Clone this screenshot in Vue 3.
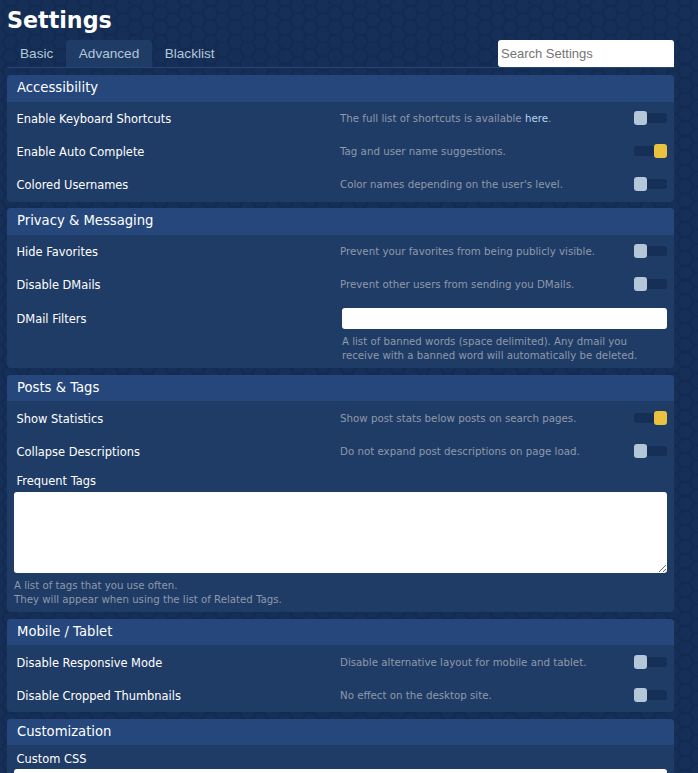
<script setup>
const sections = [
  {
    title: 'Accessibility',
    rows: [
      { label: 'Enable Keyboard Shortcuts', hint: 'The full list of shortcuts is available ', link: 'here', after: '.', on: false },
      { label: 'Enable Auto Complete', hint: 'Tag and user name suggestions.', on: true },
      { label: 'Colored Usernames', hint: "Color names depending on the user's level.", on: false },
    ],
  },
  {
    title: 'Privacy & Messaging',
    rows: [
      { label: 'Hide Favorites', hint: 'Prevent your favorites from being publicly visible.', on: false },
      { label: 'Disable DMails', hint: 'Prevent other users from sending you DMails.', on: false },
      { label: 'DMail Filters', filter: true },
    ],
  },
  {
    title: 'Posts & Tags',
    rows: [
      { label: 'Show Statistics', hint: 'Show post stats below posts on search pages.', on: true },
      { label: 'Collapse Descriptions', hint: 'Do not expand post descriptions on page load.', on: false },
    ],
    tags: true,
  },
  {
    title: 'Mobile / Tablet',
    rows: [
      { label: 'Disable Responsive Mode', hint: 'Disable alternative layout for mobile and tablet.', on: false },
      { label: 'Disable Cropped Thumbnails', hint: 'No effect on the desktop site.', on: false },
    ],
  },
]
</script>

<template>
  <div class="page">
    <h1>Settings</h1>
    <div class="tabs">
      <a class="tab">Basic</a>
      <a class="tab active">Advanced</a>
      <a class="tab">Blacklist</a>
      <input class="search" type="text" placeholder="Search Settings" />
    </div>

    <section v-for="s in sections" :key="s.title" class="section">
      <h2>{{ s.title }}</h2>
      <div class="body">
        <template v-for="r in s.rows" :key="r.label">
          <div v-if="r.filter" class="row filter">
            <span class="label">{{ r.label }}</span>
            <div class="filter-col">
              <input class="filter-input" type="text" />
              <p class="note">A list of banned words (space delimited). Any dmail you<br />receive with a banned word will automatically be deleted.</p>
            </div>
          </div>
          <div v-else class="row">
            <span class="label">{{ r.label }}</span>
            <span class="hint">{{ r.hint }}<a v-if="r.link" class="link">{{ r.link }}</a>{{ r.after }}</span>
            <span class="switch" :class="{ on: r.on }"><i></i></span>
          </div>
        </template>
        <div v-if="s.tags" class="tags">
          <span class="label">Frequent Tags</span>
          <textarea class="tag-box"></textarea>
          <p class="note">A list of tags that you use often.<br />They will appear when using the list of Related Tags.</p>
        </div>
      </div>
    </section>

    <section class="section">
      <h2>Customization</h2>
      <div class="body">
        <div class="tags custom">
          <span class="label">Custom CSS</span>
          <textarea class="tag-box"></textarea>
        </div>
      </div>
    </section>
  </div>
</template>

<style>
html, body {
  margin: 0;
  height: 100%;
  overflow: hidden;
  background-color: #152f56;
}
</style>

<style scoped>
.page {
  box-sizing: border-box;
  height: 773px;
  overflow: hidden;
  padding: 0 24px 0 7px;
  font-family: "DejaVu Sans", Verdana, sans-serif;
  color: #fff;
  background-color: #152f58;
  background-image: url("data:image/svg+xml,%3Csvg xmlns='http://www.w3.org/2000/svg' width='25' height='14.43' viewBox='0 0 25 14.43'%3E%3Cpath fill='none' stroke='%23132b50' stroke-width='2.6' d='M0 7.215 L4.17 0 M0 7.215 L4.17 14.43 M4.17 0 H12.5 M4.17 14.43 H12.5 M12.5 0 L16.67 7.215 L12.5 14.43 M16.67 7.215 H25'/%3E%3C/svg%3E");
  background-position: 1.67px 6px;
}
h1 {
  margin: 0;
  padding-top: 7px;
  font-size: 22.2px;
  line-height: 26px;
  font-weight: 700;
}
.tabs {
  display: flex;
  align-items: stretch;
  height: 27px;
  margin-top: 7px;
  border-bottom: 1px solid #24457a;
  font-family: "Liberation Sans", Arial, sans-serif;
  font-size: 13.6px;
}
.tab {
  display: flex;
  align-items: center;
  padding: 0 13px;
  color: #b4c7d9;
  border-radius: 4px 4px 0 0;
}
.tab.active {
  padding: 0 12.5px;
  background: #1f3c67;
}
.search {
  box-sizing: border-box;
  width: 176px;
  height: 27px;
  margin-left: auto;
  padding: 0 3px;
  border: 0;
  border-radius: 3px 3px 0 3px;
  background: #fff;
  font-family: "Liberation Sans", Arial, sans-serif;
  font-size: 13px;
}
.search::placeholder {
  color: #757575;
  opacity: 1;
}
.section {
  margin-top: 6.5px;
  border-radius: 4px;
  overflow: hidden;
  background: #1f3c67;
}
.tabs + .section {
  margin-top: 7px;
}
h2 {
  margin: 0;
  height: 26.5px;
  padding-left: 10px;
  background: #25477b;
  font-size: 13.2px;
  font-weight: 400;
  line-height: 26px;
}
.body {
  padding: 0 7px 1px 9.5px;
}
.row {
  display: flex;
  align-items: center;
  height: 33px;
}
.label {
  width: 323.5px;
  flex: none;
  font-size: 11.45px;
  line-height: 14px;
}
.row .label {
  padding-top: 2px;
}
.hint {
  flex: 1;
  font-size: 10.25px;
  color: #8f99a8;
}
.link {
  color: #b4d5ee;
}
.switch {
  display: flex;
  width: 33px;
  height: 10px;
  border-radius: 3px;
  background: #152f56;
  position: relative;
}
.switch i {
  position: absolute;
  top: -2px;
  left: 0;
  width: 13px;
  height: 14px;
  border-radius: 3px;
  background: #b4c7d9;
}
.switch.on i {
  left: auto;
  right: 0;
  background: #e9c340;
}
.row.filter {
  height: 66.5px;
  align-items: flex-start;
}
.row.filter .label {
  padding-top: 11.5px;
}
.filter-col {
  flex: 1;
  padding: 7.5px 0 0 2px;
}
.filter-input {
  display: block;
  box-sizing: border-box;
  width: 100%;
  height: 21px;
  border: 0;
  border-radius: 3px;
  background: #fff;
}
.note {
  margin: 6px 0 0;
  font-size: 10.2px;
  line-height: 14px;
  color: #8f99a8;
}
.tags {
  margin-left: -2.5px;
  padding-bottom: 4px;
}
.tags .label {
  display: block;
  margin-left: 2.5px;
  padding-top: 7px;
  padding-bottom: 4px;
}
.custom .label {
  padding-bottom: 3px;
}
.tag-box {
  display: block;
  box-sizing: border-box;
  width: 100%;
  height: 81px;
  border: 0;
  border-radius: 3px;
  background: #fff;
}
</style>
